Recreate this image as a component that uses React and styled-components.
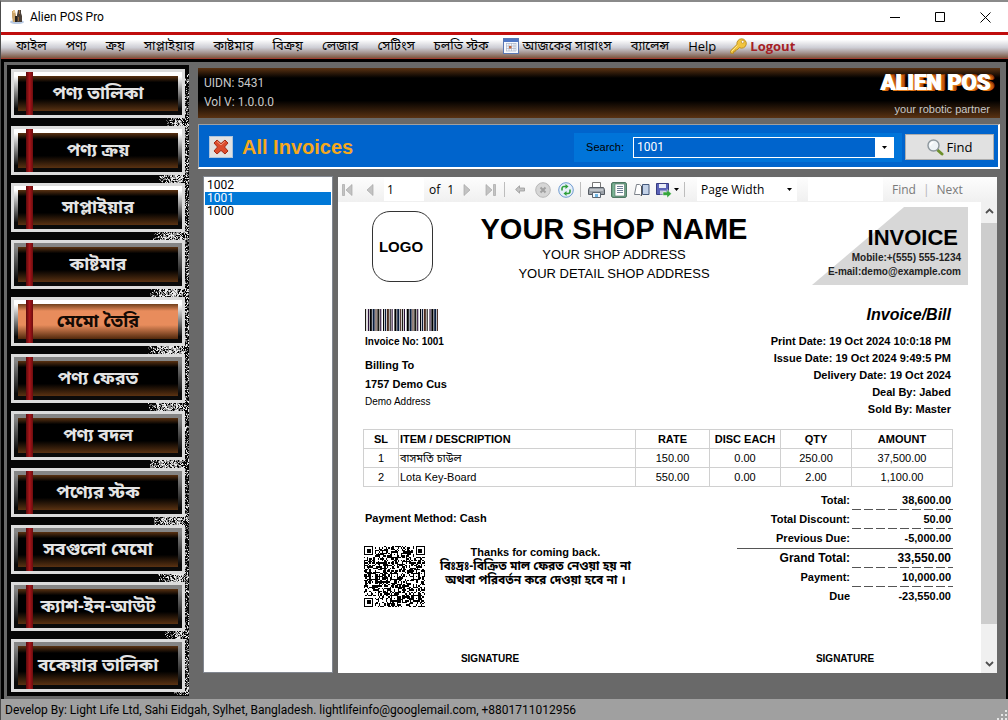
import React, { useState } from "react";
import styled, { createGlobalStyle } from "styled-components";

const menuItems = [
  "ফাইল",
  "পণ্য",
  "ক্রয়",
  "সাপ্লাইয়ার",
  "কাষ্টমার",
  "বিক্রয়",
  "লেজার",
  "সেটিংস",
  "চলতি স্টক",
];

const sideItems = [
  { label: "পণ্য তালিকা", bright: true },
  { label: "পণ্য ক্রয়", bright: true },
  { label: "সাপ্লাইয়ার", bright: true },
  { label: "কাষ্টমার" },
  { label: "মেমো তৈরি", bright: true },
  { label: "পণ্য ফেরত" },
  { label: "পণ্য বদল" },
  { label: "পণ্যের স্টক" },
  { label: "সবগুলো মেমো" },
  { label: "ক্যাশ-ইন-আউট" },
  { label: "বকেয়ার তালিকা" },
];

const invoices = ["1002", "1001", "1000"];

const details = [
  "Print Date: 19 Oct 2024 10:0:18 PM",
  "Issue Date: 19 Oct 2024 9:49:5 PM",
  "Delivery Date: 19 Oct 2024",
  "Deal By: Jabed",
  "Sold By: Master",
];

const lines = [
  ["1", "বাসমতি চাউল", "150.00", "0.00", "250.00", "37,500.00"],
  ["2", "Lota Key-Board", "550.00", "0.00", "2.00", "1,100.00"],
];

const totals = [
  { label: "Total:", value: "38,600.00", rule: "dashed" },
  { label: "Total Discount:", value: "50.00", rule: "dashed" },
  { label: "Previous Due:", value: "-5,000.00", rule: "solid" },
  { label: "Grand Total:", value: "33,550.00", rule: "dashed", large: true },
  { label: "Payment:", value: "10,000.00", rule: "dashed" },
  { label: "Due", value: "-23,550.00" },
];

// small repeatable random source, so the speckles and the code stay the same
const makeRandom = (seed) => {
  let s = seed;
  return () => {
    s = (s * 16807) % 2147483647;
    return s / 2147483647;
  };
};

const Speckles = () => {
  const random = makeRandom(77);
  const paths = { "#e8e8e8": "", "#8a8a8a": "", "#555555": "" };
  const shades = Object.keys(paths);
  for (let y = 0; y < 630; y += 1) {
    const inGap = y > 40 && (y - 4) % 57 >= 49;
    const bow = Math.round(148 - 7 + ((y - 315) / 258) ** 2 * 18);
    const from = inGap ? bow : 178;
    for (let x = from; x < 182; x += 1) {
      if (y < 12 && x < 190 - y) continue;
      const density = inGap && x > from + 8 && x < 176 ? 0.75 : 0.45;
      if (random() < density) {
        const pick = inGap && x > from + 8 ? random() * 1.8 : random() * 3;
        paths[shades[Math.floor(pick)]] += `M${x} ${y}h1v1h-1z`;
      }
    }
  }
  return (
    <SpeckleSvg viewBox="0 0 182 630" shapeRendering="crispEdges" aria-hidden>
      {shades.map((shade) => (
        <path key={shade} d={paths[shade]} fill={shade} />
      ))}
    </SpeckleSvg>
  );
};

const code39 = { "*": "nwnnwnwnn", 0: "nnnwwnwnn", 1: "wnnwnnnnw" };

const Barcode = ({ value }) => {
  const bars = [];
  let x = 0;
  `*${value}*`.split("").forEach((char) => {
    code39[char].split("").forEach((size, i) => {
      const width = size === "w" ? 2 : 1;
      if (i % 2 === 0) bars.push({ x, width });
      x += width;
    });
    x += 1;
  });
  const tints = ["#1c1a14", "#2a1038", "#000000", "#0a1c3c", "#4a2c20"];
  return (
    <svg
      width="73"
      height="22"
      viewBox={`0 0 ${x - 1} 22`}
      preserveAspectRatio="none"
      aria-hidden
    >
      {bars.map((bar, i) => (
        <rect
          key={bar.x}
          x={bar.x}
          width={bar.width + 0.2}
          height="22"
          fill={tints[i % 5]}
        />
      ))}
    </svg>
  );
};

const QrCode = () => {
  const random = makeRandom(1001);
  const size = 45;
  const grid = Array.from({ length: size }, () =>
    Array.from({ length: size }, () => random() < 0.5)
  );
  const stamp = (cx, cy, radius, isDark) => {
    for (let y = cy - radius; y <= cy + radius; y += 1)
      for (let x = cx - radius; x <= cx + radius; x += 1)
        if (grid[y] && x >= 0 && x < size)
          grid[y][x] = isDark(Math.max(Math.abs(x - cx), Math.abs(y - cy)));
  };
  [22, 38].forEach((cx) =>
    [22, 38].forEach((cy) => stamp(cx, cy, 2, (d) => d !== 1))
  );
  stamp(22, 6, 2, (d) => d !== 1);
  stamp(6, 22, 2, (d) => d !== 1);
  stamp(3, 3, 4, (d) => d !== 2 && d !== 4);
  stamp(41, 3, 4, (d) => d !== 2 && d !== 4);
  stamp(3, 41, 4, (d) => d !== 2 && d !== 4);
  const d = grid
    .map((row, y) => row.map((on, x) => (on ? `M${x} ${y}h1v1h-1z` : "")).join(""))
    .join("");
  return (
    <svg
      width="61"
      height="61"
      viewBox="0 0 45 45"
      shapeRendering="crispEdges"
      aria-hidden
    >
      <path d={d} fill="#000" />
    </svg>
  );
};

const AppIcon = () => (
  <svg width="16" height="16" viewBox="0 0 16 16">
    <ellipse cx="8" cy="13" rx="7" ry="2" fill="#b9cbe4" />
    <path d="M3 2h3l1 4v7H4l-1-5z" fill="#c9a36a" />
    <path d="M4 1h2v3H4z" fill="#e8c58c" />
    <path d="M9 1h3v3l1 3v6H8V6z" fill="#4a4038" />
    <path d="M10 1h1v4h-1zM9 8h1v4H9z" fill="#9a6a3c" />
    <path d="M6 7h2v6H6z" fill="#26221f" />
  </svg>
);

const CalendarIcon = () => (
  <svg width="16" height="16" viewBox="0 0 16 16">
    <rect x=".5" y=".5" width="15" height="15" fill="#f7f9fd" stroke="#5a78b4" />
    <path d="M1 1h14v3H1z" fill="#4f77c4" />
    <path
      d="M3 5.500h10M3 8h10M3 10.500h10M3 13h10M3.500 5v8M6 5v8M8.500 5v8M11 5v8M13 5v8"
      stroke="#a9b4c8"
      strokeWidth=".7"
      fill="none"
    />
    <path d="M6 8h2.500v2.500H6z" fill="#c0653a" />
  </svg>
);

const KeyIcon = () => (
  <svg width="17" height="16" viewBox="0 0 17 16">
    <path
      d="M7 6.500L.7 12.700V15.300H3.500V13.700H5.200V12H7L9.300 9.600A4.700 4.700 0 1 0 7 6.500z"
      fill="#f2c53d"
      stroke="#b98a1c"
      strokeWidth=".9"
    />
    <circle cx="12.700" cy="3.800" r="1.400" fill="#fff" stroke="#b98a1c" strokeWidth=".7" />
    <path d="M1.500 13.500l6-6" stroke="#fbe58f" />
  </svg>
);

const CrossIcon = () => (
  <svg width="16" height="16" viewBox="0 0 16 16">
    <path
      d="M4 1L8 4.600 12 1 15 4 11.500 8 15 12 12 15 8 11.400 4 15 1 12 4.500 8 1 4z"
      fill="#dc4b2c"
      stroke="#a32b14"
      strokeLinejoin="round"
    />
    <path d="M4 2.400L8 6l4-3.600" stroke="#f29a80" fill="none" />
  </svg>
);

const MagnifierIcon = () => (
  <svg width="17" height="17" viewBox="0 0 17 17">
    <path d="M10.500 11l4.500 4" stroke="#6d8f2c" strokeWidth="3" strokeLinecap="round" />
    <circle cx="6.500" cy="6.500" r="5.500" fill="#eef3f6" stroke="#8d979d" strokeWidth="1.400" />
    <path d="M3.500 6.500a3 3 0 0 1 3-3" stroke="#fff" strokeWidth="1.500" fill="none" />
  </svg>
);

const Caret = () => (
  <svg width="5" height="3" viewBox="0 0 5 3">
    <path d="M0 0h5L2.500 3z" fill="#000" />
  </svg>
);

const FirstIcon = () => (
  <svg width="11" height="12" viewBox="0 0 11 12">
    <path d="M.5.5h2v11h-2zM10 .5v11L4 6z" fill="#c3c3c3" stroke="#a8a8a8" strokeWidth=".7" />
  </svg>
);

const PreviousIcon = () => (
  <svg width="8" height="12" viewBox="0 0 8 12">
    <path d="M7 .5v11L1 6z" fill="#c3c3c3" stroke="#a8a8a8" strokeWidth=".7" />
  </svg>
);

const NextIcon = () => (
  <svg width="8" height="12" viewBox="0 0 8 12">
    <path d="M1 .5v11L7 6z" fill="#c3c3c3" stroke="#a8a8a8" strokeWidth=".7" />
  </svg>
);

const LastIcon = () => (
  <svg width="11" height="12" viewBox="0 0 11 12">
    <path d="M8.500.5h2v11h-2zM1 .5v11L7 6z" fill="#c3c3c3" stroke="#a8a8a8" strokeWidth=".7" />
  </svg>
);

const BackIcon = () => (
  <svg width="10" height="9" viewBox="0 0 10 9">
    <path d="M.6 4.500L4.500.8V3h5v3h-5v2.200z" fill="#c3c3c3" stroke="#999" strokeWidth=".8" />
  </svg>
);

const StopIcon = () => (
  <svg width="16" height="16" viewBox="0 0 16 16">
    <circle cx="8" cy="8" r="7.300" fill="#d6d6d6" stroke="#b8b8b8" />
    <path d="M5.500 5.500l5 5M10.500 5.500l-5 5" stroke="#a0a0a0" strokeWidth="2" />
  </svg>
);

const RefreshIcon = () => (
  <svg width="16" height="16" viewBox="0 0 16 16">
    <circle cx="8" cy="8" r="7.300" fill="#e6effa" stroke="#6f9bd0" />
    <path d="M4 8.500V6.500a2 2 0 0 1 2-2h2" stroke="#2f9e3a" strokeWidth="1.600" fill="none" />
    <path d="M7.500 2L10.500 4.500 7.500 7z" fill="#2f9e3a" />
    <path d="M12 7.500v2a2 2 0 0 1-2 2H8" stroke="#2f9e3a" strokeWidth="1.600" fill="none" />
    <path d="M8.500 9L5.500 11.500l3 2.500z" fill="#2f9e3a" />
  </svg>
);

const PrintIcon = () => (
  <svg width="17" height="16" viewBox="0 0 17 16">
    <path d="M4.500.5h8V6h-8z" fill="#fff" stroke="#777" />
    <path d="M1.500 5.500h14l1 2v5H.5v-5z" fill="#9ba1a8" stroke="#555b62" />
    <path d="M2 8h13" stroke="#e4e7ea" />
    <path d="M4.500 10.500h8v5h-8z" fill="#f2f8ff" stroke="#5d6670" />
    <path d="M7 12h3v3H7z" fill="#6fb4e0" />
  </svg>
);

const LayoutIcon = () => (
  <svg width="16" height="16" viewBox="0 0 16 16">
    <rect x=".7" y=".7" width="14.600" height="14.600" rx="1" fill="#7db596" stroke="#2f5d45" />
    <path d="M4 2h9.500v12H4z" fill="#fff" stroke="#4b6a5a" strokeWidth=".6" />
    <path d="M6 4.500h6M6 6.500h6M6 8.500h6M6 10.500h6" stroke="#6e7f96" />
  </svg>
);

const SetupIcon = () => (
  <svg width="16" height="14" viewBox="0 0 16 14">
    <path d="M2.500 1.500h3l2 1.500v10L6 11.500H.5z" fill="#fff" stroke="#7c828a" />
    <path d="M8.500 1.500h6.500v10H8.500z" fill="#c3d2e8" stroke="#465a7c" />
    <path d="M7.500 3v10" stroke="#555" />
  </svg>
);

const ExportIcon = () => (
  <svg width="16" height="16" viewBox="0 0 16 16">
    <path d="M.5 1.500h12v11H.5z" fill="#5a62b8" stroke="#373c80" />
    <path d="M3 2h7v4H3z" fill="#e9edf8" />
    <path d="M4 8.500h6v4H4z" fill="#c8cce0" />
    <path d="M7 10h4V7.500l4.500 4.300L11 16v-2.500H7z" fill="#35a53c" stroke="#fff" strokeWidth=".5" />
  </svg>
);

const ScrollArrow = ({ down }) => (
  <svg width="9" height="6" viewBox="0 0 9 6">
    <path
      d={down ? "M1 1l3.500 3.500L8 1" : "M1 5l3.500-3.500L8 5"}
      stroke="#505050"
      strokeWidth="1.800"
      fill="none"
    />
  </svg>
);

const Report = () => (
  <Page>
    <PageHeader>
      <LogoBox>LOGO</LogoBox>
      <Shop>
        <ShopName>YOUR SHOP NAME</ShopName>
        <ShopAddress>YOUR SHOP ADDRESS</ShopAddress>
        <ShopAddress>YOUR DETAIL SHOP ADDRESS</ShopAddress>
      </Shop>
      <Contact>
        <ContactTitle>INVOICE</ContactTitle>
        <div>Mobile:+(555) 555-1234</div>
        <div>E-mail:demo@example.com</div>
      </Contact>
    </PageHeader>

    <PageBody>
      <InfoRow>
        <Customer>
          <Barcode value="1001" />
          <InvoiceNo>Invoice No: 1001</InvoiceNo>
          <BillingTo>Billing To</BillingTo>
          <CustomerName>1757 Demo Cus</CustomerName>
          <CustomerAddress>Demo Address</CustomerAddress>
        </Customer>
        <Details>
          <DetailsTitle>Invoice/Bill</DetailsTitle>
          {details.map((detail) => (
            <div key={detail}>{detail}</div>
          ))}
        </Details>
      </InfoRow>

      <ItemTable>
        <colgroup>
          <Col w={35} />
          <col />
          <Col w={74} />
          <Col w={71} />
          <Col w={71} />
          <Col w={101} />
        </colgroup>
        <thead>
          <tr>
            <th>SL</th>
            <th>ITEM / DESCRIPTION</th>
            <th>RATE</th>
            <th>DISC EACH</th>
            <th>QTY</th>
            <th>AMOUNT</th>
          </tr>
        </thead>
        <tbody>
          {lines.map((line) => (
            <tr key={line[0]}>
              {line.map((cell, i) => (
                <td key={i}>{cell}</td>
              ))}
            </tr>
          ))}
        </tbody>
      </ItemTable>

      <SummaryRow>
        <div>
          <PaymentMethod>Payment Method: Cash</PaymentMethod>
          <Closing>
            <QrCode />
            <Thanks>
              <div>Thanks for coming back.</div>
              <Notice>বিঃদ্রঃ-বিক্রিত মাল ফেরত নেওয়া হয় না</Notice>
              <Notice>অথবা পরিবর্তন করে দেওয়া হবে না ।</Notice>
            </Thanks>
          </Closing>
        </div>
        <Totals>
          {totals.map(({ label, value, rule, large }) => (
            <TotalRow key={label} large={large} rule={rule}>
              <dt>{label}</dt>
              <dd>{value}</dd>
            </TotalRow>
          ))}
        </Totals>
      </SummaryRow>

      <Signatures>
        <span>SIGNATURE</span>
        <span>SIGNATURE</span>
      </Signatures>
    </PageBody>
  </Page>
);

const Toolbar = () => (
  <ToolbarWrapper>
    <ToolButton aria-label="First page"><FirstIcon /></ToolButton>
    <ToolButton aria-label="Previous page"><PreviousIcon /></ToolButton>
    <PageInput aria-label="Page" defaultValue="1" />
    <PageCount>
      <span>of</span>
      <span>1</span>
    </PageCount>
    <ToolButton aria-label="Next page"><NextIcon /></ToolButton>
    <ToolButton aria-label="Last page"><LastIcon /></ToolButton>
    <Separator />
    <ToolButton aria-label="Back"><BackIcon /></ToolButton>
    <ToolButton aria-label="Stop"><StopIcon /></ToolButton>
    <ToolButton aria-label="Refresh"><RefreshIcon /></ToolButton>
    <Separator />
    <ToolButton aria-label="Print"><PrintIcon /></ToolButton>
    <ToolButton aria-label="Print layout"><LayoutIcon /></ToolButton>
    <ToolButton aria-label="Page setup"><SetupIcon /></ToolButton>
    <ToolButton aria-label="Export" wide>
      <ExportIcon />
      <Caret />
    </ToolButton>
    <Separator />
    <ZoomBox>
      <ZoomSelect aria-label="Zoom">
        <option>Page Width</option>
      </ZoomSelect>
      <Caret />
    </ZoomBox>
    <FindInput aria-label="Find text" />
    <TextButton>Find</TextButton>
    <Bar>|</Bar>
    <TextButton>Next</TextButton>
  </ToolbarWrapper>
);

const App = () => {
  const [active, setActive] = useState("মেমো তৈরি");
  const [invoice, setInvoice] = useState("1001");

  return (
    <Window>
      <GlobalStyle />
      <TitleBar>
        <AppIcon />
        <WindowTitle>Alien POS Pro</WindowTitle>
        <WindowButton aria-label="Minimize">
          <svg width="11" height="11" viewBox="0 0 11 11">
            <path d="M0 5.500h10" stroke="#000" />
          </svg>
        </WindowButton>
        <WindowButton aria-label="Maximize">
          <svg width="11" height="11" viewBox="0 0 11 11">
            <path d="M.5.5h9v9h-9z" stroke="#000" fill="none" />
          </svg>
        </WindowButton>
        <WindowButton aria-label="Close">
          <svg width="11" height="11" viewBox="0 0 11 11">
            <path d="M.5.5l10 10M10.500.5l-10 10" stroke="#000" />
          </svg>
        </WindowButton>
      </TitleBar>

      <Menu>
        {menuItems.map((item) => (
          <MenuButton key={item}>{item}</MenuButton>
        ))}
        <MenuButton icon>
          <CalendarIcon />
          আজকের সারাংস
        </MenuButton>
        <MenuButton>ব্যালেন্স</MenuButton>
        <MenuButton>Help</MenuButton>
        <LogoutButton>
          <KeyIcon />
          Logout
        </LogoutButton>
      </Menu>

      <Body>
        <Sidebar>
          <Speckles />
          {sideItems.map(({ label, bright }) => (
            <SideButton
              key={label}
              bright={bright}
              onClick={() => setActive(label)}
            >
              <SideLabel active={label === active}>{label}</SideLabel>
            </SideButton>
          ))}
        </Sidebar>

        <Main>
          <Banner>
            <div>
              <div>UIDN: 5431</div>
              <div>Vol V: 1.0.0.0</div>
            </div>
            <Brand>
              <BrandName>ALIEN POS</BrandName>
              <Slogan>your robotic partner</Slogan>
            </Brand>
          </Banner>

          <SearchBar>
            <CloseButton aria-label="Close">
              <CrossIcon />
            </CloseButton>
            <Heading>All Invoices</Heading>
            <SearchBox>
              <label htmlFor="search">Search:</label>
              <Combo>
                <input
                  id="search"
                  value={invoice}
                  onChange={(e) => setInvoice(e.target.value)}
                />
                <button aria-label="Show invoices">
                  <Caret />
                </button>
              </Combo>
            </SearchBox>
            <FindButton>
              <MagnifierIcon />
              Find
            </FindButton>
          </SearchBar>

          <Content>
            <InvoiceList>
              {invoices.map((number) => (
                <InvoiceItem
                  key={number}
                  selected={number === invoice}
                  onClick={() => setInvoice(number)}
                >
                  {number}
                </InvoiceItem>
              ))}
            </InvoiceList>
            <Viewer>
              <Toolbar />
              <ViewerBody>
                <Report />
                <ScrollBar>
                  <ScrollArrow />
                  <Thumb />
                  <ScrollArrow down />
                </ScrollBar>
              </ViewerBody>
            </Viewer>
          </Content>
        </Main>
      </Body>

      <StatusBar>
        Develop By: Light Life Ltd, Sahi Eidgah, Sylhet, Bangladesh.
        lightlifeinfo@googlemail.com, +8801711012956
        <svg width="12" height="12" viewBox="0 0 12 12" shapeRendering="crispEdges">
          <path
            d="M9 1h2v2H9zM5 5h2v2H5zM9 5h2v2H9zM1 9h2v2H1zM5 9h2v2H5zM9 9h2v2H9z"
            fill="#e6e6e6"
          />
        </svg>
      </StatusBar>
    </Window>
  );
};

export default App;

const GlobalStyle = createGlobalStyle`
  body {
    margin: 0;
  }

  * {
    box-sizing: border-box;
  }

  button, input, select {
    font: inherit;
    color: inherit;
    padding: 0;
    border: none;
    border-radius: 0;
    background: none;
  }

  svg {
    flex: none;
    display: block;
  }
`;

const Window = styled.div`
  min-height: 100vh;
  display: flex;
  flex-direction: column;
  border-top: 2px solid #8a8a8a;
  border-left: 1px solid #4c4c4c;
  background: #fff;
  color: #000;
  font-family: "Open Sans", "Noto Sans", "Noto Sans Bengali", sans-serif;
  font-size: 12px;
`;

const TitleBar = styled.header`
  display: flex;
  align-items: center;
  height: 30px;
  padding-left: 8px;
  font-family: Roboto, sans-serif;
`;

const WindowTitle = styled.span`
  flex: 1;
  padding-left: 5px;
`;

const WindowButton = styled.button`
  display: flex;
  justify-content: center;
  width: 45px;
`;

const Menu = styled.nav`
  display: flex;
  align-items: center;
  gap: 19px;
  height: 27px;
  padding: 0 15px 2px;
  border-top: 3px solid #c00d0d;
  border-bottom: 1px solid #a03c30;
  background: linear-gradient(#fff 20%, #cdcdd4 55%, #a89a98 75%, #7c5640 100%);
  font-size: 13px;
  white-space: nowrap;
`;

const MenuButton = styled.button`
  display: flex;
  align-items: center;
  gap: 4px;
  margin-left: ${(props) => (props.icon ? "-5px" : "0")};
`;

const LogoutButton = styled(MenuButton)`
  gap: 3px;
  margin-left: -5px;
  color: #a52024;
  font-weight: bold;
`;

const Body = styled.div`
  flex: 1;
  display: flex;
  padding: 0 6px 0 3px;
  border: solid #000;
  border-width: 3px 2px 0 3px;
  background: #696969;
`;

const Sidebar = styled.nav`
  position: relative;
  display: flex;
  flex-direction: column;
  gap: 8px;
  width: 182px;
  margin: 3px 0;
  padding: 4px;
  background: #050505;
`;

const SpeckleSvg = styled.svg`
  position: absolute;
  top: 0;
  left: 0;
  width: 182px;
  height: 630px;
`;

const SideButton = styled.button`
  position: relative;
  display: flex;
  height: 49px;
  padding: 4px;
  border: 3px solid #dcdcdc;
  background: linear-gradient(
    ${(props) => (props.bright ? "#fff, #fff 10%" : "#858585, #858585 10%")},
    #0a0a0a 85%
  );

  &::after {
    content: "";
    position: absolute;
    top: 0;
    bottom: 0;
    left: 12px;
    width: 7px;
    background: linear-gradient(90deg, #5c0a0c, #a8161a 50%, #6c0c0e);
  }

  &:last-child {
    height: 53px;
  }
`;

const SideLabel = styled.span`
  flex: 1;
  align-self: stretch;
  display: flex;
  align-items: center;
  justify-content: center;
  padding-bottom: 4px;
  background: ${(props) =>
    props.active
      ? "linear-gradient(#70401c, #e88c5c 20%, #e88c5c 60%, #50280c)"
      : "linear-gradient(#5a3212, #000 18%, #000 65%, #5a3212)"};
  color: ${(props) => (props.active ? "#140a04" : "#e4e4e4")};
  font-size: 18px;
  font-weight: bold;
  line-height: 20px;
  white-space: nowrap;
`;

const Main = styled.main`
  flex: 1;
  min-width: 0;
  display: flex;
  flex-direction: column;
  padding: 6px 0 26px 9px;
`;

const Banner = styled.div`
  display: flex;
  justify-content: space-between;
  height: 50px;
  padding: 6px 5px 0 6px;
  background: linear-gradient(#5a3212, #000 20%, #000 65%, #5a3212);
  color: #c8c8c8;
  font-family: Roboto, sans-serif;
  line-height: 19px;
`;

const Brand = styled.div`
  text-align: right;
`;

const BrandName = styled.div`
  padding-right: 5px;
  color: #fff;
  font-size: 22px;
  font-weight: 900;
  line-height: 18px;
  text-shadow: 1px 0 #fff, 2px 1px #e07818, 4px 1px #c05a10, 5px 0 #8a3c08;
`;

const Slogan = styled.div`
  padding: 7px 5px 0 0;
  font-family: "Liberation Sans", sans-serif;
  font-size: 11px;
  line-height: 20px;
`;

const SearchBar = styled.div`
  display: flex;
  align-items: center;
  height: 45px;
  margin-top: 6px;
  padding: 2px 4px 0 10px;
  border: solid;
  border-width: 1px 2px 2px 1px;
  border-color: #a0a0a0 #fff #fff #a0a0a0;
  background: #0064cc;
`;

const CloseButton = styled.button`
  display: flex;
  align-items: center;
  justify-content: center;
  width: 24px;
  height: 22px;
  border: 1px solid #adc4dc;
  background: #e1e1e1;
`;

const Heading = styled.h1`
  flex: 1;
  margin: 0 0 0 9px;
  color: #f5a81c;
  font-family: "Liberation Sans", sans-serif;
  font-size: 20px;
  line-height: 24px;
`;

const SearchBox = styled.div`
  display: flex;
  align-items: center;
  gap: 9px;
  height: 29px;
  padding: 0 8px 0 12px;
  background: #0074d9;
  font-family: "Liberation Sans", sans-serif;
  font-size: 11px;
`;

const Combo = styled.div`
  display: flex;
  width: 261px;
  height: 21px;
  border: 1px solid #fff;

  input {
    flex: 1;
    min-width: 0;
    padding-left: 3px;
    background: #0064cc;
    color: #fff;
    font-family: Roboto, sans-serif;
    font-size: 12px;
    outline: none;
  }

  button {
    display: flex;
    align-items: center;
    justify-content: center;
    width: 18px;
    background: #fff;
  }
`;

const FindButton = styled.button`
  display: flex;
  align-items: center;
  justify-content: center;
  gap: 3px;
  width: 89px;
  height: 26px;
  margin-left: 3px;
  border: 1px solid #adadad;
  background: #e1e1e1;
  font-size: 13px;
`;

const Content = styled.div`
  flex: 1;
  display: flex;
  gap: 5px;
  padding: 7px 3px 0 5px;
`;

const InvoiceList = styled.div`
  display: flex;
  flex-direction: column;
  width: 130px;
  padding: 2px 1px;
  border: 1px solid #828790;
  background: #fff;
  font-family: Roboto, sans-serif;
`;

const InvoiceItem = styled.button`
  padding-left: 2px;
  background: ${(props) => (props.selected ? "#0078d7" : "none")};
  color: ${(props) => (props.selected ? "#fff" : "#000")};
  line-height: 13px;
  text-align: left;
`;

const Viewer = styled.section`
  flex: 1;
  min-width: 0;
  display: flex;
  flex-direction: column;
  margin-top: 1px;
  background: #fff;
`;

const ToolbarWrapper = styled.div`
  display: flex;
  align-items: center;
  gap: 5px;
  height: 25px;
  background: linear-gradient(#fdfdfd, #f0f0f0);
  white-space: nowrap;
`;

const ToolButton = styled.button`
  display: flex;
  align-items: center;
  justify-content: ${(props) => (props.wide ? "space-between" : "center")};
  width: ${(props) => (props.wide ? "23px" : "18px")};
  height: 20px;
`;

const PageInput = styled.input`
  width: 40px;
  height: 23px;
  padding-left: 3px;
  background: #fff;
`;

const PageCount = styled.span`
  display: flex;
  gap: 7px;
  width: 24px;
`;

const Separator = styled.span`
  width: 2px;
  height: 15px;
  border-left: 1px solid #bdbdbd;
`;

const ZoomBox = styled.span`
  display: flex;
  align-items: center;
  width: 100px;
  height: 23px;
  margin-left: 6px;
  padding: 0 5px 0 4px;
  background: #fff;
`;

const ZoomSelect = styled.select`
  flex: 1;
  appearance: none;
`;

const FindInput = styled.input`
  width: 75px;
  height: 23px;
  margin: 0 4px 0 6px;
  background: #fff;
`;

const TextButton = styled.button`
  color: #7a7a7a;
`;

const Bar = styled.span`
  padding: 0 2px;
  color: #b4b4b4;
`;

const ViewerBody = styled.div`
  flex: 1;
  display: flex;
`;

const ScrollBar = styled.div`
  display: flex;
  flex-direction: column;
  align-items: center;
  width: 16px;
  padding: 6px 0;
  background: #f0f0f0;
`;

const Thumb = styled.div`
  flex: 1;
  align-self: stretch;
  margin: 9px 0 37px;
  background: #cdcdcd;
`;

const Page = styled.article`
  flex: 1;
  min-width: 0;
  padding-top: 5px;
  font-family: "Liberation Sans", "Noto Sans Bengali", sans-serif;
  font-size: 11px;
`;

const PageHeader = styled.div`
  display: flex;
  align-items: center;
  padding: 0 13px 0 34px;
`;

const LogoBox = styled.div`
  display: flex;
  align-items: center;
  justify-content: center;
  width: 61px;
  height: 71px;
  padding-right: 3px;
  border: 1px solid #333;
  border-radius: 18px;
  font-size: 15px;
  font-weight: bold;
`;

const Shop = styled.div`
  flex: 1;
  align-self: flex-start;
  padding: 6px 17px 0 0;
  text-align: center;
  white-space: nowrap;
`;

const ShopName = styled.div`
  font-size: 29px;
  font-weight: bold;
  line-height: 32px;
`;

const ShopAddress = styled.div`
  font-size: 13px;
  line-height: 19px;
`;

const Contact = styled.div`
  position: relative;
  isolation: isolate;
  width: 156px;
  height: 78px;
  padding: 17px 7px 0 0;
  color: #222;
  font-size: 10px;
  font-weight: bold;
  line-height: 14px;
  text-align: right;

  &::before {
    content: "";
    position: absolute;
    inset: 0;
    z-index: -1;
    background: #d7d7d7;
    clip-path: polygon(59% 0, 100% 0, 100% 100%, 0 100%);
  }
`;

const ContactTitle = styled.div`
  padding-right: 3px;
  color: #000;
  font-size: 22px;
  line-height: 27px;
`;

const PageBody = styled.div`
  padding: 20px 28px 0 25px;
`;

const InfoRow = styled.div`
  display: flex;
  justify-content: space-between;
  padding: 0 2px;
`;

const Customer = styled.div`
  padding-top: 4px;
  font-weight: bold;
`;

const InvoiceNo = styled.div`
  font-size: 10px;
  line-height: 22px;
`;

const BillingTo = styled.div`
  line-height: 24px;
`;

const CustomerName = styled.div`
  line-height: 14px;
`;

const CustomerAddress = styled.div`
  font-size: 10px;
  font-weight: normal;
  line-height: 22px;
`;

const Details = styled.div`
  font-weight: bold;
  line-height: 17px;
  text-align: right;
`;

const DetailsTitle = styled.div`
  margin-bottom: 8px;
  font-size: 16px;
  font-style: italic;
  line-height: 20px;
`;

const Col = styled.col`
  width: ${(props) => props.w}px;
`;

const ItemTable = styled.table`
  width: 100%;
  margin-top: 11px;
  border-collapse: collapse;
  table-layout: fixed;
  text-align: center;

  th,
  td {
    height: 19px;
    padding: 0 1px;
    border: 1px solid #d0d0d0;
    line-height: 16px;
  }

  th:nth-child(2),
  td:nth-child(2) {
    text-align: left;
  }
`;

const SummaryRow = styled.div`
  display: flex;
  justify-content: space-between;
  padding-top: 4px;
`;

const PaymentMethod = styled.div`
  padding: 17px 2px 0;
  font-weight: bold;
  line-height: 20px;
`;

const Closing = styled.div`
  display: flex;
  gap: 15px;
  margin-top: 18px;
  padding-left: 1px;
`;

const Thanks = styled.div`
  font-weight: bold;
  line-height: 13px;
  text-align: center;
  white-space: nowrap;
`;

const Notice = styled.div`
  font-size: 12px;
  line-height: 14px;
`;

const Totals = styled.dl`
  width: 216px;
  margin: 0;
  font-weight: bold;
`;

const dashes =
  "repeating-linear-gradient(90deg, #555 0, #555 9px, transparent 9px, transparent 12px) bottom / 100% 1px no-repeat";

const TotalRow = styled.div`
  display: flex;
  height: ${(props) => (props.rule === "solid" ? "20px" : "19px")};
  border-bottom: ${(props) => (props.rule === "solid" ? "1px solid #555" : "none")};
  font-size: ${(props) => (props.large ? "12px" : "11px")};
  line-height: 19px;
  text-align: right;

  dt {
    flex: 1;
    padding-right: 2px;
  }

  dd {
    width: 101px;
    margin: 0;
    padding-right: 2px;
    background: ${(props) => (props.rule === "dashed" ? dashes : "none")};
  }
`;

const Signatures = styled.div`
  display: grid;
  grid-template-columns: 254px 216px;
  justify-content: space-between;
  margin-top: 43px;
  font-size: 10px;
  font-weight: bold;
  line-height: 18px;
  text-align: center;
`;

const StatusBar = styled.footer`
  display: flex;
  align-items: center;
  justify-content: space-between;
  height: 22px;
  padding-left: 4px;
  background: #a0a0a0;
  font-family: Roboto, sans-serif;

  svg {
    align-self: flex-end;
  }
`;
